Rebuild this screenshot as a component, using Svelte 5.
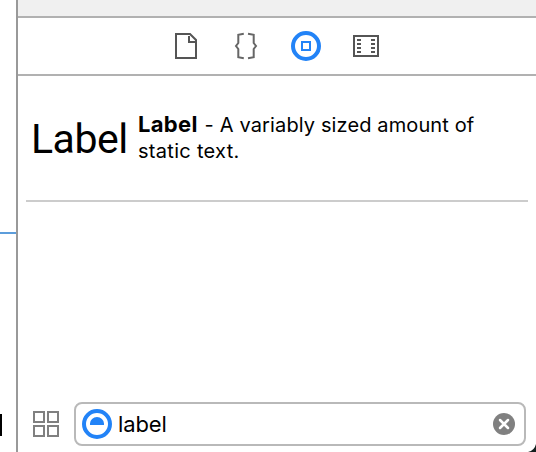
<script>
  let query = $state('label');
  const filmRows = [9, 13, 17, 21];
</script>

<div class="window">
  <div class="editor">
    <div class="guide"></div>
    <div class="cursor"></div>
  </div>
  <section class="library">
    <header></header>
    <nav>
      <svg width="30" height="30" viewBox="0 0 30 30" fill="none" stroke="#555" stroke-width="2">
        <path d="M5 3H19L25 9V27H5ZM18 5V11H24" />
      </svg>
      <svg width="30" height="30" viewBox="0 0 30 30" fill="none" stroke="#666" stroke-width="2">
        <path d="M12.8 2.8L7.3 3.8V12L5 15L7.3 18V26.2L12.8 27.2M17 2.8L22.7 3.8V12L25 15L22.7 18V26.2L17 27.2" />
      </svg>
      <svg width="30" height="30" viewBox="0 0 30 30" fill="none" stroke="#2283f7">
        <circle cx="15" cy="15" r="13" stroke-width="4" />
        <rect x="11" y="11" width="8" height="8" stroke-width="2" />
      </svg>
      <svg width="30" height="30" viewBox="0 0 30 30" fill="none" stroke="#555" stroke-width="2">
        <rect x="3" y="5" width="24" height="20" />
        {#each filmRows as y}
          <path d="M6 {y}h4M20 {y}h4" />
        {/each}
      </svg>
    </nav>
    <main>
      <article>
        <div class="preview">Label</div>
        <p><b>Label</b> <span class="dash">-</span> <span class="summary">A variably sized amount of</span><br />static text.</p>
      </article>
    </main>
    <footer>
      <svg width="26" height="26" viewBox="0 0 26 26" fill="none" stroke="#808080" stroke-width="2">
        <path d="M1 1H11V11H1ZM15 1H25V11H15ZM1 15H11V25H1ZM15 15H25V25H15Z" />
      </svg>
      <div class="search">
        <svg width="30" height="30" viewBox="0 0 30 30">
          <circle cx="15" cy="15" r="13" fill="none" stroke="#2283f7" stroke-width="4" />
          <path d="M8 16V14.5A7 6.5 0 0 1 22 14.5V16Z" fill="#2283f7" />
        </svg>
        <span>{query}</span>
        <svg class="clear" width="22" height="22" viewBox="0 0 22 22">
          <circle cx="11" cy="11" r="11" fill="#808080" />
          <path d="M7 7L15 15M15 7L7 15" fill="none" stroke="#fff" stroke-width="2.5" stroke-linecap="round" />
        </svg>
      </div>
    </footer>
  </section>
  <svg class="corner" width="8" height="8" viewBox="0 0 8 8"><path d="M8 0V8H0Q6.5 6.5 8 0Z" fill="#13201f" /></svg>
</div>

<style>
  :global(body) { margin: 0; background: #fff; }
  .window {
    position: relative;
    display: flex;
    width: 536px;
    height: 452px;
    overflow: hidden;
    background: #fff;
    color: #000;
    font-family: Inter, "Liberation Sans", sans-serif;
  }
  .editor {
    width: 16px;
    border-right: 2px solid #999;
    display: flex;
    flex-direction: column;
    flex-shrink: 0;
  }
  .guide { height: 2px; margin-top: 232px; background: #5c9ddb; }
  .cursor { width: 2px; height: 22px; margin-top: 180px; background: #000; }
  .library { flex: 1; display: flex; flex-direction: column; min-width: 0; }
  header { height: 16px; background: #f0f0f0; border-bottom: 2px solid #b1b1b1; }
  nav {
    height: 56px;
    padding-right: 2px;
    border-bottom: 2px solid #b1b1b1;
    display: flex;
    align-items: center;
    justify-content: center;
    gap: 30px;
  }
  svg { display: block; flex-shrink: 0; }
  main { flex: 1; padding: 0 8px; }
  article {
    height: 124px;
    border-bottom: 2px solid #ccc;
    display: flex;
    align-items: center;
  }
  .preview {
    width: 112px;
    padding: 1px 0 0 5px;
    box-sizing: border-box;
    font-family: Roboto, Inter, sans-serif;
    font-size: 41px;
    line-height: 50px;
    font-weight: 400;
    letter-spacing: -0.5px;
    white-space: nowrap;
  }
  p {
    margin: 0;
    font-size: 20px;
    line-height: 26px;
    letter-spacing: 0.3px;
    white-space: nowrap;
  }
  b { font-size: 22px; line-height: 20px; letter-spacing: 0.3px; }
  .dash { margin-left: 0.8px; }
  .summary { letter-spacing: 0.12px; }
  footer {
    height: 50px;
    padding: 0 10px 0 15px;
    display: flex;
    align-items: flex-start;
    gap: 15px;
  }
  footer > svg { margin-top: 9px; }
  .search {
    flex: 1;
    height: 44px;
    box-sizing: border-box;
    border: 2px solid #b9b9b9;
    border-radius: 8px;
    padding: 0 9px 0 6px;
    display: flex;
    align-items: center;
    font-size: 22px;
    letter-spacing: -0.1px;
  }
  .search span { margin-left: 6px; }
  .clear { margin-left: auto; }
  .corner { position: absolute; right: 0; bottom: 0; }
</style>
